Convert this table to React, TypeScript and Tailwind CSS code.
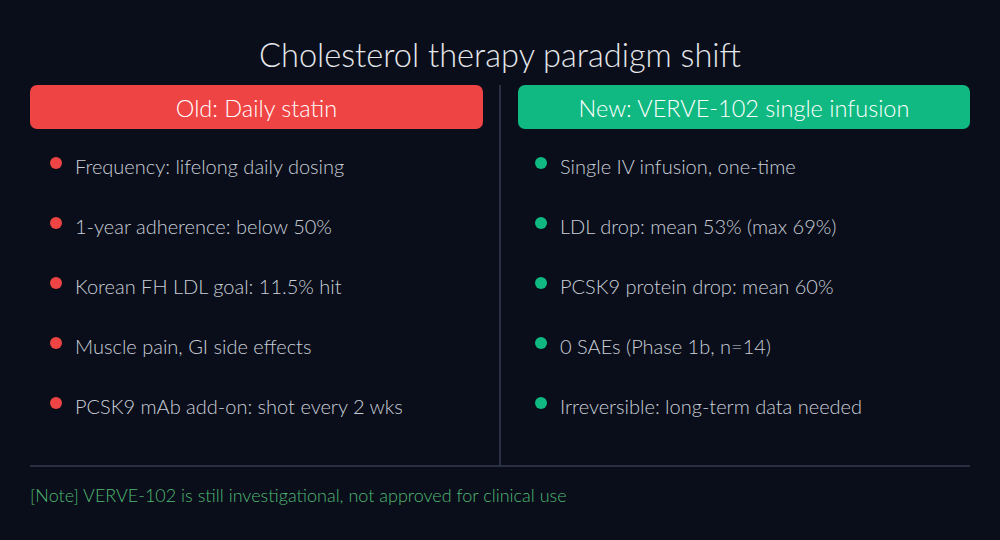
const oldItems = [
  "Frequency: lifelong daily dosing",
  "1-year adherence: below 50%",
  "Korean FH LDL goal: 11.5% hit",
  "Muscle pain, GI side effects",
  "PCSK9 mAb add-on: shot every 2 wks",
]

const newItems = [
  "Single IV infusion, one-time",
  "LDL drop: mean 53% (max 69%)",
  "PCSK9 protein drop: mean 60%",
  "0 SAEs (Phase 1b, n=14)",
  "Irreversible: long-term data needed",
]

function Column({ title, items, head, dot, width, inset }: { title: string; items: string[]; head: string; dot: string; width: string; inset: string }) {
  return (
    <div className={`flex flex-col ${width}`}>
      <div className={`flex h-[44px] items-center justify-center rounded-[7px] pt-[4px] text-[23.5px] font-light text-white ${head}`}>
        {title}
      </div>
      <ul className={`mt-[22px] flex flex-col gap-[30px] ${inset}`}>
        {items.map((t) => (
          <li key={t} className="flex h-[30px] items-center gap-[13px] text-[20px] font-light text-[#c9ced8]">
            <span className={`size-[12px] shrink-0 -translate-y-[3px] rounded-full ${dot}`} />
            {t}
          </li>
        ))}
      </ul>
    </div>
  )
}

export default function App() {
  return (
    <div
      className="flex h-[540px] w-[1000px] flex-col bg-[#0a0e1a] px-[30px]"
      style={{ fontFamily: "Lato, 'Noto Sans', sans-serif" }}
    >
      <h1 className="mt-[33px] h-[44px] text-center text-[32.6px] font-light leading-[44px] text-[#e5e7eb]">
        Cholesterol therapy paradigm shift
      </h1>
      <div className="mt-[8px] flex h-[380px]">
        <Column title="Old: Daily statin" items={oldItems} head="bg-[#ef4444]" dot="bg-[#ef4444]" width="w-[453px]" inset="pl-[20px]" />
        <div className="ml-[16px] mr-[17px] w-[2px] bg-[#283042]" />
        <Column title="New: VERVE-102 single infusion" items={newItems} head="bg-[#10b981]" dot="bg-[#10b981]" width="w-[452px]" inset="pl-[17px]" />
      </div>
      <div className="h-[2px] bg-[#283042]" />
      <p className="mt-[15px] text-[18px] font-light text-[#4fb873]">
        [Note] VERVE-102 is still investigational, not approved for clinical use
      </p>
    </div>
  )
}
